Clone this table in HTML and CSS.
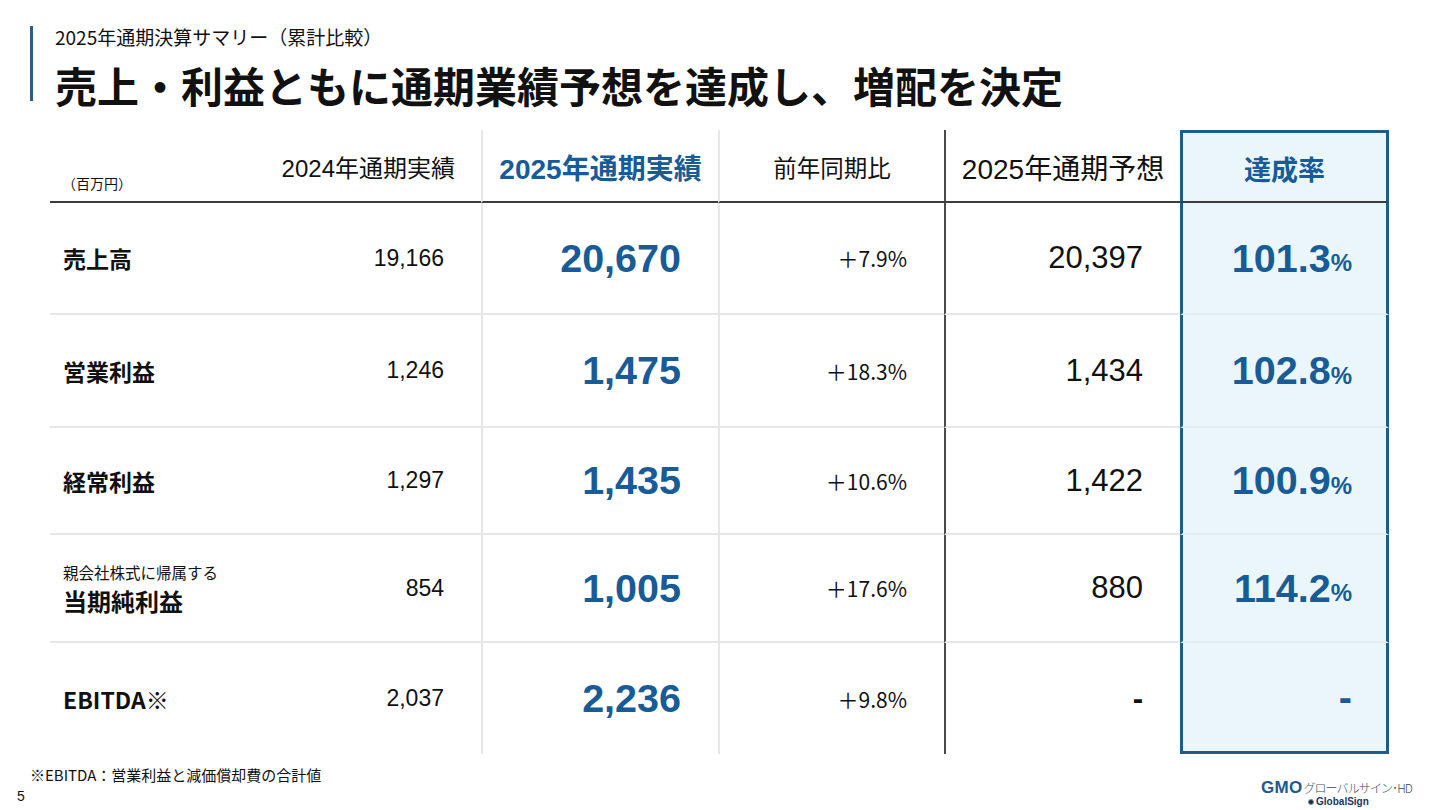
FILE: index.html
```html
<!DOCTYPE html>
<html lang="ja">
<head>
<meta charset="utf-8">
<title>2025年通期決算サマリー</title>
<link rel="stylesheet" href="styles.css">
</head>
<body>
<div class="slide">
  <header class="head">
    <p class="sub">2025年通期決算サマリー（累計比較）</p>
    <h1 class="title">売上・利益ともに通期業績予想を達成し、増配を決定</h1>
  </header>

  <div class="tbl">
    <div class="c h lab"><span class="unit">（百万円）</span></div>
    <div class="c h v24">2024年通期実績</div>
    <div class="c h v25">2025年通期実績</div>
    <div class="c h yoy">前年同期比</div>
    <div class="c h fc">2025年通期予想</div>
    <div class="c h rate first">達成率</div>

    <div class="c lab">売上高</div>
    <div class="c v24">19,166</div>
    <div class="c v25">20,670</div>
    <div class="c yoy">＋7.9%</div>
    <div class="c fc">20,397</div>
    <div class="c rate">101.3<span class="pct">%</span></div>

    <div class="c lab">営業利益</div>
    <div class="c v24">1,246</div>
    <div class="c v25">1,475</div>
    <div class="c yoy">＋18.3%</div>
    <div class="c fc">1,434</div>
    <div class="c rate">102.8<span class="pct">%</span></div>

    <div class="c lab">経常利益</div>
    <div class="c v24">1,297</div>
    <div class="c v25">1,435</div>
    <div class="c yoy">＋10.6%</div>
    <div class="c fc">1,422</div>
    <div class="c rate">100.9<span class="pct">%</span></div>

    <div class="c lab stack"><span class="pre">親会社株式に帰属する</span><span class="main">当期純利益</span></div>
    <div class="c v24">854</div>
    <div class="c v25">1,005</div>
    <div class="c yoy">＋17.6%</div>
    <div class="c fc">880</div>
    <div class="c rate">114.2<span class="pct">%</span></div>

    <div class="c lab last">EBITDA※</div>
    <div class="c v24 last">2,037</div>
    <div class="c v25 last">2,236</div>
    <div class="c yoy last">＋9.8%</div>
    <div class="c fc last dash">-</div>
    <div class="c rate last">-</div>
  </div>

  <footer class="foot">
    <div class="notes">
      <p class="note">※EBITDA：営業利益と減価償却費の合計値</p>
      <p class="page">5</p>
    </div>
    <div class="logo">
      <div class="logo-top"><span class="gmo">GMO</span><span class="gname">グローバルサイン･HD</span></div>
      <div class="logo-bot"><span class="dot"></span>GlobalSign</div>
    </div>
  </footer>
</div>
</body>
</html>
```

FILE: styles.css
```css
html, body {
  margin: 0;
  padding: 0;
  background: #ffffff;
}

body {
  font-family: "Noto Sans CJK JP", "Noto Sans", sans-serif;
  color: #111111;
}

.slide {
  width: 1440px;
  height: 810px;
  overflow: hidden;
}

/* ---------- heading ---------- */
.head {
  margin: 26px 0 0 30px;
  height: 75px;
  border-left: 3px solid #2b5d86;
  padding-left: 22px;
}

.sub {
  margin: 0;
  font-size: 19px;
  line-height: 22px;
  font-weight: 400;
}

.title {
  margin: 15px 0 0;
  font-size: 42px;
  line-height: 44px;
  font-weight: 700;
  color: #111111;
  white-space: nowrap;
}

/* ---------- table ---------- */
.tbl {
  margin: 29px 0 0 50px;
  width: 1339px;
  display: grid;
  grid-template-columns: 220px 211px 237px 226px 236px 209px;
  grid-template-rows: 73px 112px 113px 107px 108px 111px;
}

.c {
  box-sizing: border-box;
  display: flex;
  align-items: center;
  justify-content: flex-end;
  padding-right: 37px;
  border-bottom: 2px solid #e7e7e7;
  font-family: "Liberation Sans", "Noto Sans CJK JP", sans-serif;
}

.c.last {
  border-bottom: none;
}

.c.h {
  border-bottom: 2px solid #3c3c3c;
  padding-top: 2px;
}

/* label column */
.lab {
  justify-content: flex-start;
  padding: 0 0 0 13px;
  font-family: "Noto Sans CJK JP", sans-serif;
  font-weight: 700;
  font-size: 23px;
  color: #111111;
}

.lab.h {
  align-items: flex-end;
  padding: 0 0 8px 12px;
}

.unit {
  font-size: 14px;
  font-weight: 400;
  line-height: 20px;
}

.lab.stack {
  flex-direction: column;
  align-items: flex-start;
  justify-content: flex-start;
  padding-top: 26px;
}

.pre {
  display: block;
  font-size: 15.5px;
  line-height: 22px;
  font-weight: 400;
}

.main {
  display: block;
  font-size: 24px;
  line-height: 36px;
}

/* 2024 */
.v24 {
  font-size: 23px;
  color: #111111;
}

.v24.h {
  padding-right: 26px;
  font-size: 24px;
}

/* 2025 actual */
.v25 {
  border-left: 2px solid #e7e7e7;
  font-size: 39.5px;
  font-weight: 700;
  color: #175b97;
}

.v25.h {
  justify-content: center;
  padding-right: 0;
  font-size: 28px;
}

/* yoy */
.yoy {
  border-left: 2px solid #e7e7e7;
  font-family: "Noto Sans CJK JP", sans-serif;
  font-size: 21px;
  color: #111111;
}

.yoy.h {
  justify-content: center;
  padding-right: 0;
  font-size: 23.5px;
}

/* forecast */
.fc {
  border-left: 2px solid #4a4a4a;
  font-size: 31px;
  color: #111111;
}

.fc.dash {
  font-weight: 700;
}

.fc.h {
  justify-content: center;
  padding-right: 0;
  font-size: 28px;
}

/* achievement rate */
.rate {
  border-left: 3px solid #1e5c8c;
  border-right: 3px solid #1e5c8c;
  background: #ebf6fb;
  padding-right: 34px;
  font-size: 39.5px;
  font-weight: 700;
  color: #175b97;
  border-bottom-color: #e2ecf1;
}

.rate.h {
  justify-content: center;
  padding-right: 0;
  font-family: "Noto Sans CJK JP", sans-serif;
  font-size: 27px;
}

.rate.first {
  border-top: 3px solid #1e5c8c;
  border-bottom-color: #3c3c3c;
}

.rate.last {
  border-bottom: 3px solid #1e5c8c;
}

.pct {
  font-size: 24px;
  margin-top: 10px;
}

/* ---------- footer ---------- */
.foot {
  display: flex;
  justify-content: space-between;
  align-items: flex-start;
  margin-top: 11px;
}

.notes {
  padding-left: 17px;
}

.note {
  margin: 0 0 0 13px;
  font-size: 15px;
  line-height: 20px;
  color: #111111;
}

.page {
  margin: 2px 0 0;
  font-family: "Liberation Sans", sans-serif;
  font-size: 14px;
  line-height: 18px;
  color: #111111;
}

.logo {
  margin: 15px 28px 0 0;
  display: flex;
  flex-direction: column;
  align-items: center;
}

.logo-top {
  display: flex;
  align-items: baseline;
  white-space: nowrap;
}

.gmo {
  font-family: "Liberation Sans", sans-serif;
  font-weight: 900;
  font-size: 17px;
  line-height: 16px;
  color: #1d5a92;
  letter-spacing: 0.3px;
}

.gname {
  font-size: 12px;
  line-height: 16px;
  font-weight: 300;
  color: #3a4a5a;
  letter-spacing: -0.9px;
  margin-left: 1px;
}

.logo-bot {
  display: flex;
  align-items: center;
  gap: 2px;
  font-family: "Liberation Sans", sans-serif;
  font-weight: 700;
  font-size: 10px;
  line-height: 12px;
  color: #1b3560;
  margin-left: 4px;
}

.dot {
  width: 6px;
  height: 6px;
  border-radius: 50%;
  background: #1b2a4a;
  border: 1px solid #7a8aa0;
  box-sizing: border-box;
}
```
